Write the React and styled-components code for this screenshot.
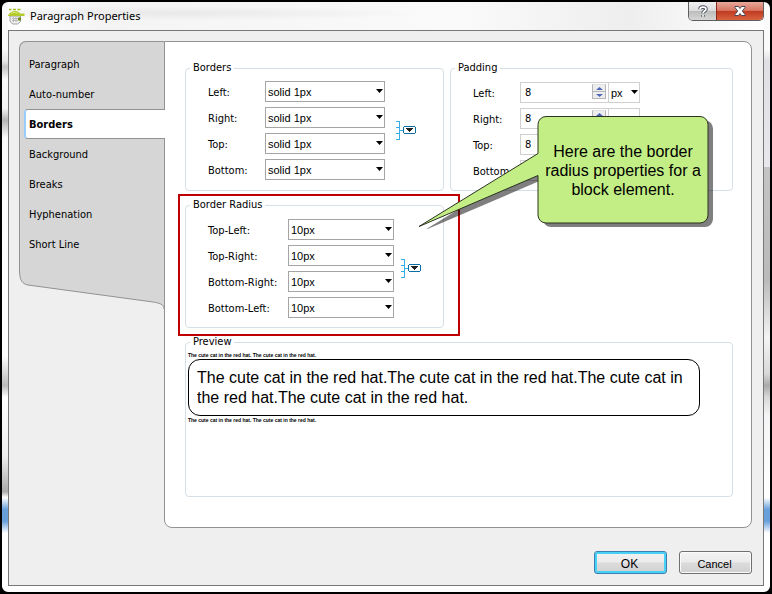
import React from "react";
import styled, { createGlobalStyle, css } from "styled-components";

const Global = createGlobalStyle`
  *, *::before, *::after { box-sizing: border-box; }
  body { margin: 0; background: #000; color: #000; font: 11px/14px "DejaVu Sans Condensed", "DejaVu Sans", sans-serif; }
  button, input, select { font: inherit; color: inherit; margin: 0; padding: 0; }
`;

const Dialog = styled.main`
  display: flex;
  flex-direction: column;
  min-height: 100vh;
  padding: 0 6px 6px;
  border: 2px solid #000;
  border-radius: 8px;
  background:
    linear-gradient(#fafafa 8%, #e6e6e6 10%, #c4c4c4 11%, #fafafa 13%, #f4f4f4 18%, #b5b5b5 20%, #fafafa 23%, #fff 60%, #bbb 65%, #fff 67%, #eee 77%, #aaa 83%, #fff 84%, #68a0dc 86%, #68a0dc 88%, #fff 90%) left / 6px 100% no-repeat,
    linear-gradient(#fafafa 8%, #e0e0e4 10%, #e8e8ec 28%, #c4c4c4 28%, #bababa 47%, #f4f4f6 57%, #d8d8d8 63%, #aaa 65%, #d8d8d8 67%, #f4f4f6 70%, #fff 84%, #68a0dc 86%, #68a0dc 88%, #fff 90%) right / 6px 100% no-repeat,
    #fff;
`;

const TitleBar = styled.header`
  display: flex;
  align-items: flex-start;
  height: 28px;
  background: radial-gradient(ellipse at 22% 40%, #e9e9e9, transparent 30%), linear-gradient(90deg, #fff, #f4f4f4 12%, #fafafa 60%, #eee 82%, #fff);
`;

const Title = styled.h1`
  flex: 1;
  display: flex;
  align-items: center;
  gap: 5px;
  height: 28px;
  margin: 0;
  font: 11px/16px "Noto Sans", sans-serif;
`;

const WindowButtons = styled.div`
  display: flex;
  border: 1px solid #5d5d5d;
  border-top: 0;
  border-radius: 0 0 5px 5px;
  overflow: hidden;
`;

const WindowButton = styled.button`
  display: grid;
  place-items: center;
  width: ${(p) => (p.$close ? 47 : 27)}px;
  height: 18px;
  border: 0;
  border-left: ${(p) => (p.$close ? "1px solid #8c2a20" : "0")};
  background: ${(p) =>
    p.$close
      ? "linear-gradient(#e8a99c, #d6735f 48%, #c03b22 52%, #d9633f)"
      : "linear-gradient(#f0f0f0, #dcdcdc 48%, #bdbdbd 52%, #d6d6d6)"};
`;

const Client = styled.div`
  flex: 1;
  display: flex;
  flex-direction: column;
  padding: 10px 11px 11px 10px;
  border: 1px solid #777;
  background: #efefef;
`;

const Workspace = styled.div`
  flex: 1;
  display: flex;
`;

const Sidebar = styled.nav`
  flex: none;
  width: 145px;
`;

const TabList = styled.div`
  padding: 7px 0 13px 4px;
  border: 1px solid #929292;
  border-width: 1px 0 0 1px;
  border-top-left-radius: 7px;
  background: #d6d6d6;
`;

const Tab = styled.a`
  display: flex;
  align-items: center;
  height: 30px;
  padding: 2px 0 0 5px;
  color: inherit;
  text-decoration: none;
  ${(p) =>
    p.$active &&
    css`
      position: relative;
      margin-right: -1px;
      padding-left: 3px;
      border: 1px solid #929292;
      border-width: 1px 0;
      border-left: 2px solid #99ccff;
      border-radius: 4px 0 0 4px;
      background: #fff;
      font-weight: bold;
      z-index: 1;
    `}
`;

const SidebarFoot = styled.svg`
  display: block;
  width: 100%;
  height: 37px;
`;

const Panel = styled.section`
  position: relative;
  flex: 1;
  display: flex;
  flex-direction: column;
  gap: 7px;
  padding: 19px 18px 30px 20px;
  border: 1px solid #929292;
  border-radius: 0 8px 8px 8px;
  background: #fff;
`;

const Groups = styled.div`
  display: grid;
  grid-template-columns: 259fr 283fr;
  gap: 7px 6px;
`;

const groupPadding = {
  high: "6px 0 10px 22px",
  low: "7px 0 9px 22px",
  preview: "3px 32px 8px 2px",
};

const Group = styled.fieldset`
  min-width: 0;
  margin: 0;
  padding: ${(p) => groupPadding[p.$kind]};
  border: 1px solid #d5dfe5;
  border-radius: 4px;
  ${(p) => p.$kind === "preview" && "flex: 1;"}
`;

const Legend = styled.legend`
  margin-left: ${(p) => (p.$preview ? 2 : -18)}px;
  padding: 0 3px;
`;

const Highlight = styled.div`
  position: relative;
  &::after {
    content: "";
    position: absolute;
    inset: -4px -16px -8px -7px;
    border: 2px solid #c00000;
    pointer-events: none;
  }
`;

const Fields = styled.div`
  display: flex;
  align-items: center;
  gap: ${(p) => p.$gap}px;
`;

const Rows = styled.div`
  display: grid;
  grid-template-columns: ${(p) => p.$label}px ${(p) => p.$field}px;
  grid-auto-rows: 21px;
  align-items: center;
  row-gap: 5px;
`;

const FieldLabel = styled.label`
  padding-top: 2px;
`;

const SelectBox = styled.span`
  position: relative;
  display: flex;
  height: 21px;
  font-family: "Liberation Sans", sans-serif;
  svg {
    position: absolute;
    right: 2px;
    top: 8px;
    pointer-events: none;
  }
`;

const NativeSelect = styled.select`
  appearance: none;
  width: 100%;
  padding: 0 2px;
  border: 1px solid ${(p) => (p.$light ? "#d0d0d0" : "#a5a5a5")};
  border-radius: 0;
  background: #fff;
`;

const Measure = styled.span`
  display: grid;
  grid-template-columns: 1fr 32px;
`;

const NumberBox = styled.span`
  display: flex;
  justify-content: space-between;
  height: 21px;
  padding: 1px 2px 1px 4px;
  border: 1px solid #d0d0d0;
  border-right: 0;
`;

const NumberInput = styled.input`
  width: 40px;
  height: 16px;
  border: 0;
  outline: 0;
`;

const Spinner = styled.span`
  display: grid;
  width: 14px;
  height: 15px;
  border: 1px solid #b5b5b5;
  border-top-color: #e2e2e2;
`;

const SpinButton = styled.button`
  display: grid;
  place-items: center;
  border: 0;
  background: #eee;
  & + & {
    border-top: 1px solid #b5b5b5;
  }
`;

const LinkButton = styled.button`
  display: grid;
  border: 0;
  background: none;
`;

const TinyText = styled.p`
  margin: 0;
  font: bold 5px/6px "Liberation Sans", sans-serif;
`;

const PreviewBlock = styled.p`
  margin: 1px 0;
  padding: 8px 8px 7px;
  border: 1px solid #000;
  border-radius: 12px;
  font: 16px/20px "Liberation Sans", sans-serif;
`;

const Callout = styled.aside`
  position: absolute;
  left: 253px;
  top: 74px;
  display: grid;
  grid-template-columns: 120px 170px;
`;

const Bubble = styled.svg`
  grid-area: 1 / 1 / 2 / 3;
`;

const CalloutText = styled.p`
  grid-area: 1 / 2 / 2 / 3;
  align-self: start;
  margin: 26px 0 0;
  text-align: center;
  font: 16px/19px "Liberation Sans", sans-serif;
`;

const Actions = styled.footer`
  display: flex;
  justify-content: flex-end;
  gap: 12px;
  margin-top: 23px;
`;

const ActionButton = styled.button`
  width: 73px;
  height: 23px;
  padding: 2px 2px 0 0;
  border: 1px solid ${(p) => (p.$primary ? "#3c7fb1" : "#707070")};
  border-radius: 3px;
  background: linear-gradient(#f2f2f2, #ebebeb 48%, #dcdcdc 52%, #d0d0d0);
  box-shadow: inset 0 0 0 ${(p) => (p.$primary ? "2px #48d0f5" : "1px #fbfbfb")};
  font-family: "Liberation Sans", sans-serif;
  font-size: ${(p) => (p.$primary ? 12 : 11)}px;
`;

const Arrow = () => (
  <svg width="7" height="4" viewBox="0 0 7 4" aria-hidden="true">
    <path d="M0 0h7L3.5 4z" fill="#000" />
  </svg>
);

const AppIcon = () => (
  <svg width="17" height="17" viewBox="0 0 17 17" aria-hidden="true">
    <path d="M1 1.500h2.500M5 1.500h3M9.500 1.500h3" stroke="#a3c01c" strokeWidth="1.500" />
    <path d="M2 8h10.500v5.500l-3 2.500H4.500L2 13z" fill="#efefef" stroke="#a0a0a0" />
    <path d="M4 10.500h6M4 12.500h6M5.500 9v5M8 9v5" stroke="#b9b9b9" />
    <path d="M0 7.500C1 5 4 3 7 3s4 1.200 5 2.500h4.500V8H0z" fill="#b3cc2c" />
    <path d="M3 5.500C5 4 8 4 10 5.500" fill="none" stroke="#dce87a" />
    <circle cx="11.500" cy="11" r="1.700" fill="#6f8c12" />
  </svg>
);

const HelpIcon = () => (
  <svg width="10" height="13" viewBox="0 0 10 13" aria-hidden="true" fill="none">
    <path d="M2 4.200C2 1.500 8 1.300 8 4.200 8 6 5 6 5 8.200M5 10v1.700" stroke="#4c5260" strokeWidth="3.600" />
    <path d="M2 4.200C2 1.500 8 1.300 8 4.200 8 6 5 6 5 8.200M5 10v1.700" stroke="#fff" strokeWidth="1.700" />
  </svg>
);

const CloseIcon = () => (
  <svg width="12" height="10" viewBox="0 0 12 10" aria-hidden="true">
    <path d="M1 .5h3.500L6 2.500 7.500.5H11v1L8.300 5 11 8.500v1H7.500L6 7.500 4.500 9.500H1v-1L3.700 5 1 1.500z" fill="#fff" stroke="#4b4450" />
  </svg>
);

const LinkIcon = () => (
  <svg width="20" height="19" viewBox="0 0 20 19" aria-hidden="true" fill="none" shapeRendering="crispEdges">
    <path d="M0 .5h3.500v18H0M0 6.500h3M0 12.500h3M4 9.500h3" stroke="#35aeea" />
    <path d="M8 5.500h11M8 12.500h11M7.500 6v6M19.500 6v6" stroke="#0b6ea0" />
    <path d="M10 7h7v1h-1v1h-1v1h-1v1h-1v-1h-1v-1h-1v-1h-1z" fill="#222" />
  </svg>
);

const Select = ({ id, value, options, light }) => (
  <SelectBox>
    <NativeSelect id={id} defaultValue={value} $light={light} aria-label={light ? "Unit" : undefined}>
      {options.map((o) => (
        <option key={o}>{o}</option>
      ))}
    </NativeSelect>
    <Arrow />
  </SelectBox>
);

const SelectRows = ({ names, value, prefix, label, field }) => (
  <Rows $label={label} $field={field}>
    {names.map((name) => (
      <React.Fragment key={name}>
        <FieldLabel htmlFor={`${prefix}-${name}`}>{name}:</FieldLabel>
        <Select id={`${prefix}-${name}`} value={value} options={[value]} />
      </React.Fragment>
    ))}
  </Rows>
);

const SpinTriangle = ({ down }) => (
  <svg width="7" height="3" viewBox="0 0 7 3" aria-hidden="true">
    <path d={down ? "M0 0h7L3.500 3z" : "M0 3h7L3.500 0z"} fill="#4d68b8" />
  </svg>
);

const PaddingRow = ({ name }) => (
  <>
    <FieldLabel htmlFor={`padding-${name}`}>{name}:</FieldLabel>
    <Measure>
      <NumberBox>
        <NumberInput id={`padding-${name}`} defaultValue="8" />
        <Spinner>
          <SpinButton aria-label="Increase"><SpinTriangle /></SpinButton>
          <SpinButton aria-label="Decrease"><SpinTriangle down /></SpinButton>
        </Spinner>
      </NumberBox>
      <Select value="px" options={["px"]} light />
    </Measure>
  </>
);

const tabs = ["Paragraph", "Auto-number", "Borders", "Background", "Breaks", "Hyphenation", "Short Line"];
const sides = ["Left", "Right", "Top", "Bottom"];
const corners = ["Top-Left", "Top-Right", "Bottom-Right", "Bottom-Left"];
const bubblePath =
  "M128 .5H282a8 8 0 0 1 8 8V99a8 8 0 0 1-8 8H128a8 8 0 0 1-8-8V59.500L1 110.500 120 37.500V8.500a8 8 0 0 1 8-8z";

export default function App() {
  return (
    <>
      <Global />
      <Dialog>
        <TitleBar>
          <Title><AppIcon />Paragraph Properties</Title>
          <WindowButtons>
            <WindowButton aria-label="Help"><HelpIcon /></WindowButton>
            <WindowButton $close aria-label="Close"><CloseIcon /></WindowButton>
          </WindowButtons>
        </TitleBar>
        <Client>
          <Workspace>
            <Sidebar>
              <TabList>
                {tabs.map((t) => (
                  <Tab key={t} href="#" $active={t === "Borders"}>{t}</Tab>
                ))}
              </TabList>
              <SidebarFoot viewBox="0 0 145 37" preserveAspectRatio="none" aria-hidden="true">
                <path d="M.5 0C1 8 3 12 9 13L134 30C140 31 145 32 145 37V0z" fill="#d6d6d6" />
                <path d="M.5 0C1 8 3 12 9 13L134 30C140 31 145 32 145 37" fill="none" stroke="#929292" />
              </SidebarFoot>
            </Sidebar>
            <Panel>
              <Groups>
                <Group $kind="high">
                  <Legend>Borders</Legend>
                  <Fields $gap={11}>
                    <SelectRows names={sides} value="solid 1px" prefix="border" label={57} field={120} />
                    <LinkButton aria-label="Link borders"><LinkIcon /></LinkButton>
                  </Fields>
                </Group>
                <Group $kind="low">
                  <Legend>Padding</Legend>
                  <Rows $label={47} $field={120}>
                    {sides.map((s) => <PaddingRow key={s} name={s} />)}
                  </Rows>
                </Group>
                <Highlight>
                  <Group $kind="low">
                    <Legend>Border Radius</Legend>
                    <Fields $gap={7}>
                      <SelectRows names={corners} value="10px" prefix="radius" label={80} field={106} />
                      <LinkButton aria-label="Link radii"><LinkIcon /></LinkButton>
                    </Fields>
                  </Group>
                </Highlight>
              </Groups>
              <Group $kind="preview">
                <Legend $preview>Preview</Legend>
                <TinyText>The cute cat in the red hat. The cute cat in the red hat.</TinyText>
                <PreviewBlock>
                  The cute cat in the red hat.The cute cat in the red hat.The cute cat in the red hat.The cute cat in the red hat.
                </PreviewBlock>
                <TinyText>The cute cat in the red hat. The cute cat in the red hat.</TinyText>
              </Group>
              <Callout>
                <Bubble width="296" height="113" viewBox="0 0 296 113" aria-hidden="true">
                  <path d={bubblePath} transform="translate(5 4)" fill="#000" fillOpacity=".5" />
                  <path d={bubblePath} fill="#c3ee85" stroke="#2b3320" />
                </Bubble>
                <CalloutText>Here are the border radius properties for a block element.</CalloutText>
              </Callout>
            </Panel>
          </Workspace>
          <Actions>
            <ActionButton $primary>OK</ActionButton>
            <ActionButton>Cancel</ActionButton>
          </Actions>
        </Client>
      </Dialog>
    </>
  );
}
